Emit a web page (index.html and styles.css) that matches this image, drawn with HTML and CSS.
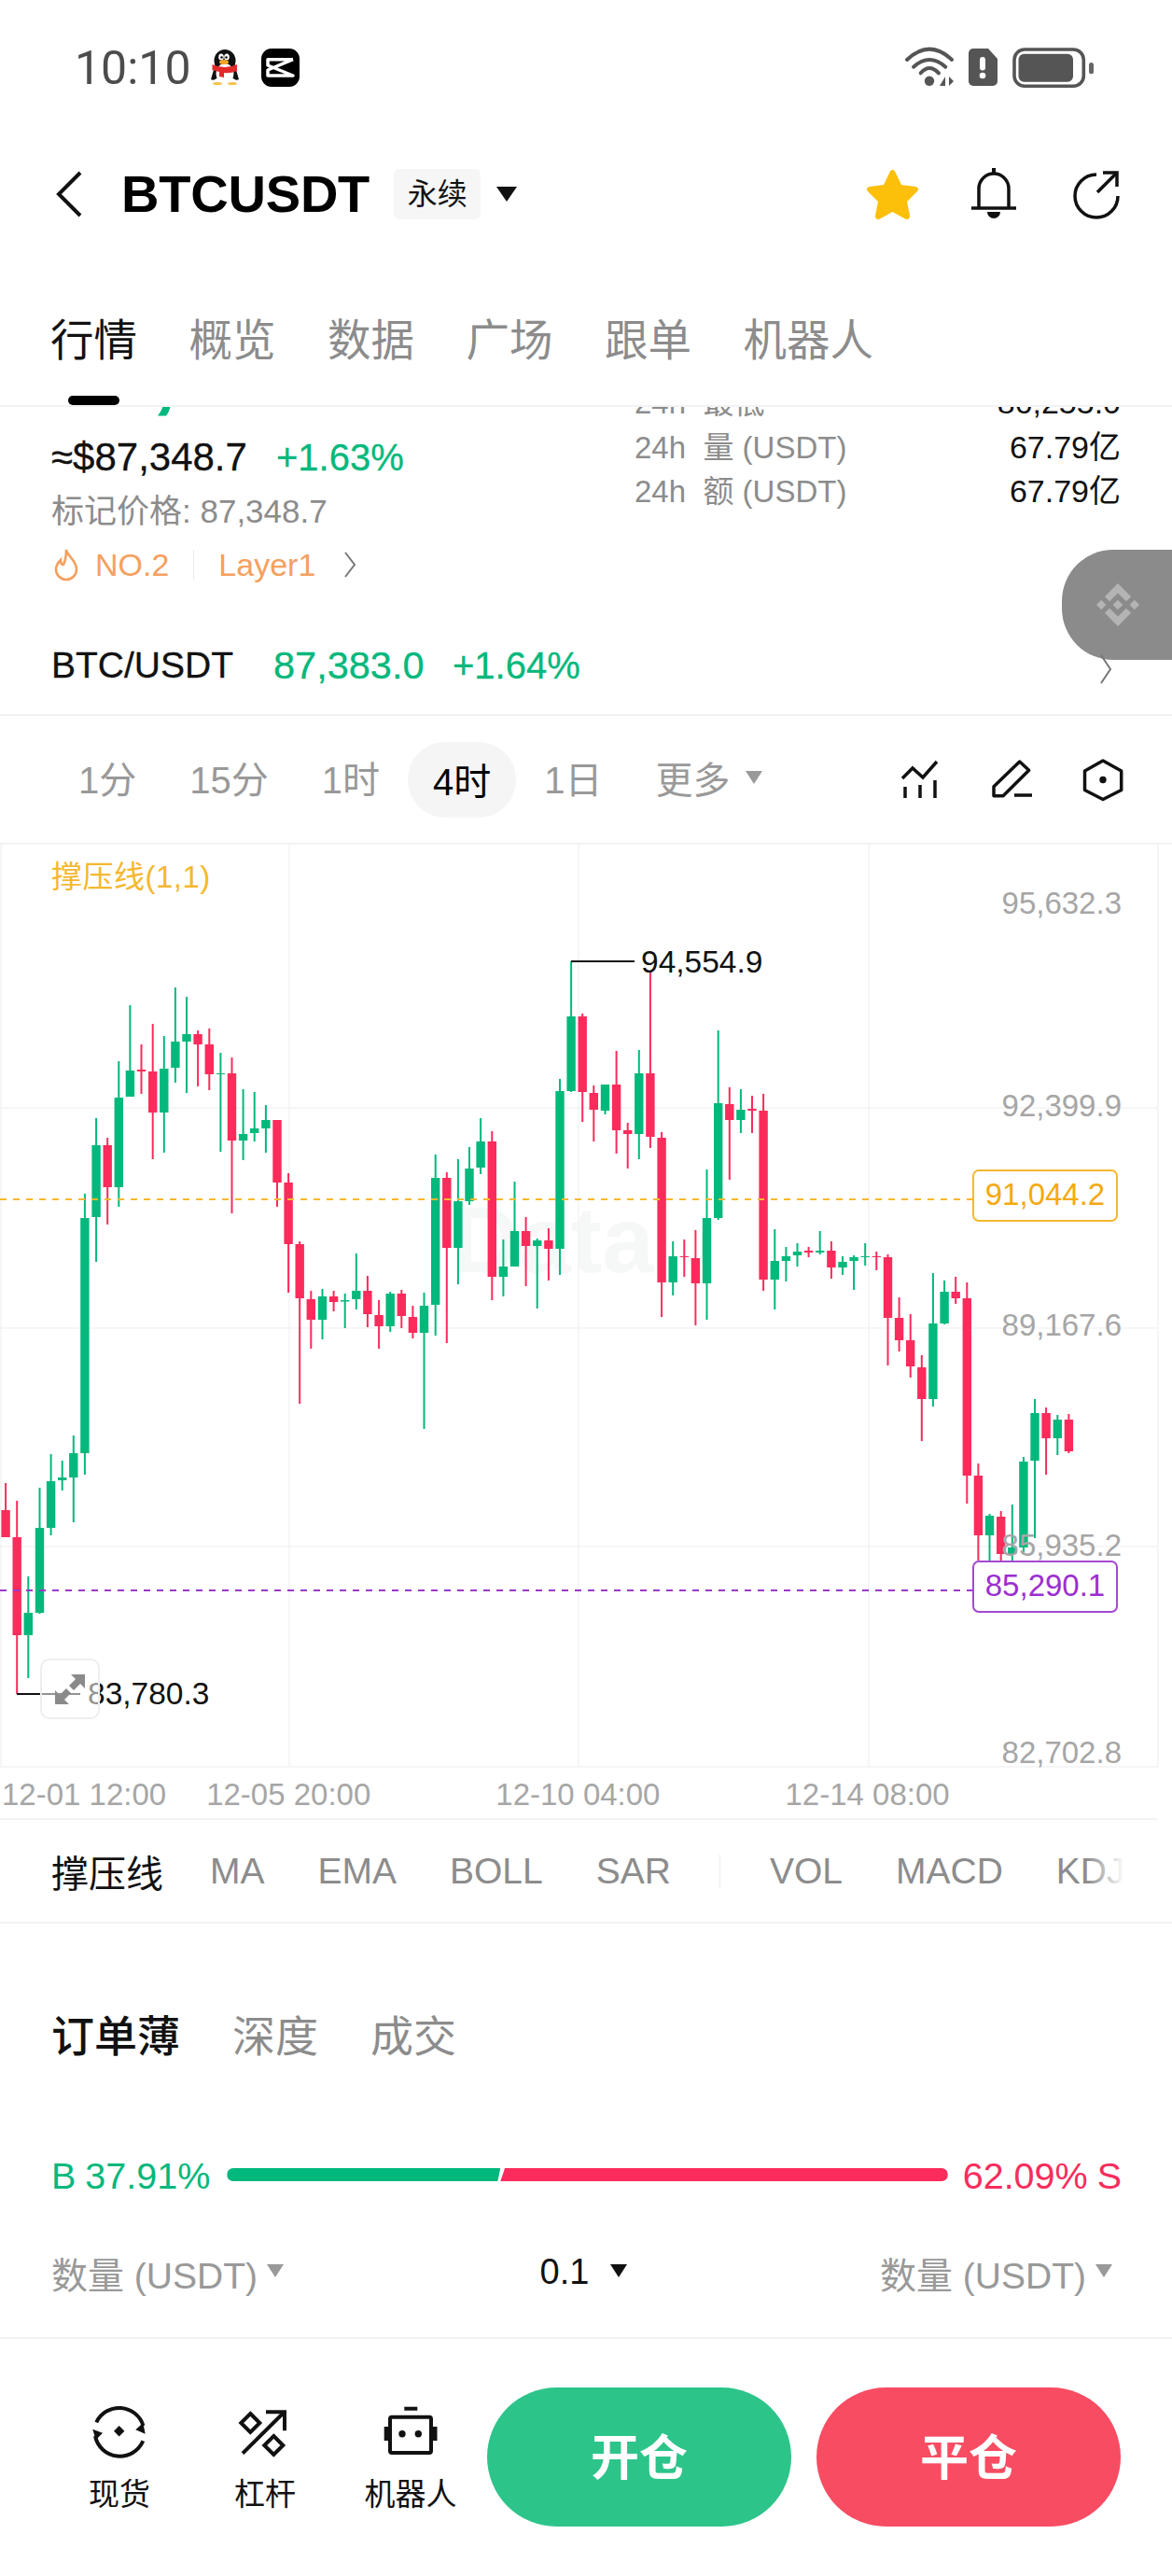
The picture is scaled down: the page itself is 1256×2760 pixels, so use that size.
FILE: index.html
```html
<!DOCTYPE html>
<html lang="zh">
<head>
<meta charset="utf-8">
<title>BTCUSDT</title>
<link rel="stylesheet" href="styles.css">
</head>
<body>
<div class="page">
  <header class="status">
    <span class="clock">10:10</span>
    <svg class="qq" viewBox="0 0 30 38"><ellipse cx="15" cy="12" rx="11.500" ry="12" fill="#111"/><path d="M5 15L0 32q3 2 6-1h18q3 3 6 1l-5-17z" fill="#111"/><ellipse cx="15" cy="26" rx="9.500" ry="11" fill="#fff"/><ellipse cx="11" cy="8" rx="2.800" ry="3.500" fill="#fff"/><ellipse cx="17" cy="8" rx="2.800" ry="3.500" fill="#fff"/><circle cx="11.500" cy="8.500" r="1.300" fill="#111"/><circle cx="16.500" cy="8.500" r="1.300" fill="#111"/><ellipse cx="14" cy="13.500" rx="5" ry="2.500" fill="#f5a623"/><path d="M1.500 16q13.500 6 26.500 0v7q-8 3-14 2v5l-5-1v-5q-4-1-7.500-2z" fill="#e32a2a"/><ellipse cx="7" cy="36.500" rx="5" ry="1.500" fill="#f5c14a"/><ellipse cx="23" cy="36.500" rx="5" ry="1.500" fill="#f5c14a"/></svg>
    <svg class="cc" viewBox="0 0 41 41"><rect width="41" height="41" rx="11" fill="#000"/><path d="M34 11.700H7V18L34 29H7v-6L34 11.700" fill="none" stroke="#fff" stroke-width="3.500" stroke-linejoin="round"/></svg>
    <div class="sys">
      <svg class="wifi" viewBox="0 0 52 40"><g fill="none" stroke="#555" stroke-width="4" stroke-linecap="round"><path d="M2 12Q26-10.600 50 12"/><path d="M9 19.700Q26 4.300 43.300 19.700"/><path d="M16.700 26.300Q26 15.700 36 26.300"/></g><circle cx="26" cy="34.700" r="5.200" fill="#555"/><path d="M43 30v10h-6zM47 30v10l5-5z" fill="#555"/></svg>
      <svg class="alert" viewBox="0 0 31 40"><path d="M5 0h16l10 11v24a5 5 0 0 1-5 5H5a5 5 0 0 1-5-5V5a5 5 0 0 1 5-5z" fill="#555"/><rect x="12" y="9" width="6" height="14.500" rx="3" fill="#fff"/><circle cx="15" cy="29" r="3.300" fill="#fff"/></svg>
      <svg class="batt" viewBox="0 0 87 43"><rect x="2" y="2" width="74.300" height="39.300" rx="11" fill="none" stroke="#555" stroke-width="3.600"/><rect x="6.500" y="6.700" width="58.500" height="30" rx="6" fill="#555"/><rect x="82" y="16" width="5" height="12.300" rx="2.500" fill="#666"/></svg>
    </div>
  </header>

  <nav class="nav">
    <svg class="back" viewBox="0 0 28 50"><path d="M26 2L3 25l23 23" fill="none" stroke="#111" stroke-width="4"/></svg>
    <h1 class="title">BTCUSDT</h1>
    <span class="badge">永续</span>
    <i class="tri tri-lg"></i>
    <div class="nav-icons">
      <svg class="star" viewBox="0 0 57 55"><path d="M28.500 1c1.500 0 2.500 1 3 2.500l6.500 13.500 15 2c3 .4 4 3 2 5L44 35l3 15c.5 3-2 5-5 3.500L28.500 46 15 53.500c-3 1.500-5.500-.5-5-3.500l3-15L2 24c-2-2-1-4.600 2-5l15-2 6.500-13.500C26 2 27 1 28.500 1z" fill="#fcbf0a"/></svg>
      <svg class="bell" viewBox="0 0 50 56"><g fill="none" stroke="#111" stroke-width="3.500"><path d="M9 42V22a16 16 0 0 1 32 0v20"/><path d="M1 43h48"/></g><rect x="23" y="0" width="4" height="7" fill="#111"/><path d="M18 47h14a7 7 0 0 1-14 0z" fill="#111"/></svg>
      <svg class="share" viewBox="0 0 50 52"><g fill="none" stroke="#111" stroke-width="3.500"><path d="M25 5a23 23 0 1 0 23 23"/><path d="M26 24L46 4"/><path d="M32 3h15v15"/></g></svg>
    </div>
  </nav>

  <div class="tabs">
    <div class="tab on">行情<i class="bar-ind"></i></div>
    <div class="tab">概览</div>
    <div class="tab">数据</div>
    <div class="tab">广场</div>
    <div class="tab">跟单</div>
    <div class="tab">机器人</div>
  </div>

  <section class="info">
    <div class="columns">
      <div class="left">
        <div class="big">87,383.0</div>
        <div class="approx"><span class="usd">≈$87,348.7</span><span class="up pct">+1.63%</span></div>
        <div class="mark">标记价格: 87,348.7</div>
        <div class="tags">
          <svg class="flame" viewBox="0 0 26 36"><path d="M13 2c1 7 11 11 11 21a11 11 0 0 1-22 0c0-5 3-8 5-10 0 3 1 5 3 5 2-4 3-10 3-16z" fill="none" stroke="#f5a05e" stroke-width="2.600"/></svg>
          <span class="no">NO.2</span><i class="tag-sep"></i><span class="no">Layer1</span>
          <svg class="chev tag-chev" viewBox="0 0 14 30"><path d="M2 2l10 13L2 28" fill="none" stroke="#777" stroke-width="2"/></svg>
        </div>
      </div>
      <div class="right">
        <div class="kv"><span>24h&nbsp;&nbsp;最低</span><b>86,255.0</b></div>
        <div class="kv"><span>24h&nbsp;&nbsp;量 (USDT)</span><b>67.79亿</b></div>
        <div class="kv"><span>24h&nbsp;&nbsp;额 (USDT)</span><b>67.79亿</b></div>
      </div>
    </div>
    <div class="pair">
      <span class="pair-name">BTC/USDT</span>
      <span class="up pair-price">87,383.0</span>
      <span class="up pair-pct">+1.64%</span>
    </div>
    <div class="float">
      <svg class="bnb" viewBox="0 0 126.610 126.610"><path d="M38.730 53.200l24.590-24.580 24.600 24.600 14.300-14.310L63.320 0 24.430 38.900zM0 63.310l14.300-14.310 14.310 14.310-14.310 14.300zM38.730 73.410l24.590 24.590 24.600-24.600 14.310 14.290-38.900 38.910-38.910-38.880-.02-.02zM97.990 63.310l14.300-14.310 14.320 14.310-14.310 14.300zM77.830 63.300L63.320 48.780 52.590 59.510l-1.240 1.230-2.540 2.540 14.510 14.500 14.510-14.470z" fill="#b4b4b4"/></svg>
    </div>
    <svg class="chev pair-chev" viewBox="0 0 14 34"><path d="M2 2l10 15L2 32" fill="none" stroke="#777" stroke-width="2"/></svg>
  </section>

  <div class="periods">
    <span class="per">1分</span>
    <span class="per">15分</span>
    <span class="per">1时</span>
    <span class="per per-on">4时</span>
    <span class="per">1日</span>
    <span class="per more">更多<i class="tri tri-grey"></i></span>
    <div class="tools">
      <svg class="tool t1" viewBox="0 0 40 42"><g fill="none" stroke="#111" stroke-width="3.500"><path d="M1 20L12 9l11 10L38 2"/><path d="M4 29v12M20 27v14M36 22v19"/></g></svg>
      <svg class="tool t2" viewBox="0 0 43 42"><path d="M2 38.700v-10L29.700 2l10 9.300L12 38.700z" fill="none" stroke="#111" stroke-width="3.500" stroke-linejoin="round"/><path d="M24 38h19" fill="none" stroke="#111" stroke-width="3.500"/></svg>
      <svg class="tool t3" viewBox="0 0 42 44"><path d="M21 2l19.700 11v20.500L21 43.500 1.500 33.500V13z" fill="none" stroke="#111" stroke-width="3.500" stroke-linejoin="round"/><circle cx="21" cy="22.500" r="3.700" fill="#111"/></svg>
    </div>
  </div>

  <div class="chart">
    <span class="wm">Data</span>
    <svg class="plot" viewBox="0 905 1256 990">
      <path class="grid" d="M1 905V1893M310 905V1893M620 905V1893M931 905V1893M1241 905V1893M0 1187H1241M0 1423H1241M0 1657H1241M0 1893H1241"/>
      <path class="wick g" d="M30.300 1689V1798M42.500 1594V1729M54.600 1558V1645M66.700 1565V1597M78.800 1538V1631M90.900 1279V1580M103.100 1198V1352M127.300 1137V1293M139.400 1077V1175M175.800 1110V1235M187.900 1058V1160M200 1068V1171M236.400 1128V1234M260.600 1167V1243M272.700 1170V1223M284.900 1184V1235M345.500 1381V1435M369.700 1386V1423M381.800 1343V1403M418.200 1384V1427M454.500 1385V1531M466.700 1237V1431M490.900 1242V1376M503 1229V1291M515.100 1198V1258M539.400 1328V1389M551.500 1266V1357M575.700 1327V1402M600 1156V1366M612.100 1030V1170M648.500 1162V1194M684.800 1125V1242M721.200 1330V1388M757.500 1253V1414M769.700 1104V1307M793.900 1167V1214M830.300 1317V1403M842.400 1336V1373M854.500 1332V1357M878.700 1319V1344M903 1346V1366M915.100 1345V1382M927.200 1332V1356M999.900 1364V1507M1012.100 1372V1419M1060.500 1622V1672M1084.800 1612V1672M1096.900 1561V1665M1109 1499V1648M1133.300 1516V1559"/>
      <path class="body g" d="M30.300 1728V1752M42.500 1637V1728M54.600 1587V1637M66.700 1583V1586M78.800 1557V1583M90.900 1305V1557M103.100 1227V1304M127.300 1176V1272M139.400 1147V1175M175.800 1145V1192M187.900 1116V1144M200 1108V1116M236.400 1150V1151M260.600 1215V1222M272.700 1209V1214M284.900 1200V1209M345.500 1389V1414M369.700 1393V1394.500M381.800 1383V1392M418.200 1386V1421M454.500 1399V1428M466.700 1262V1398M490.900 1287V1337M503 1252V1287M515.100 1223V1251M539.400 1357V1368M551.500 1319V1357M575.700 1329V1335M600 1169V1338M612.100 1089V1169M648.500 1162V1190M684.800 1150V1215M721.200 1346V1374M757.500 1305V1375M769.700 1182V1305M793.900 1189V1200M830.300 1351V1371M842.400 1346V1351M854.500 1341V1345M878.700 1340V1342M903 1352V1358M915.100 1347V1351M927.200 1346V1347M999.900 1418V1499M1012.100 1384V1418M1060.500 1624V1645M1084.800 1658V1665M1096.900 1566V1658M1109 1514V1565M1133.300 1521V1541"/>
      <path class="wick r" d="M6.100 1589V1647M18.200 1608V1815M115.200 1219V1312M151.500 1119V1172M163.700 1097V1242M212.100 1104V1164M224.300 1102V1168M248.500 1133V1300M297 1200V1293M309.100 1257V1385M321.200 1330V1504M333.300 1383V1445M357.600 1383V1405M393.900 1367V1422M406.100 1393V1445M430.300 1382V1423M442.400 1399V1434M478.800 1256V1439M527.300 1212V1393M563.600 1304V1378M587.900 1316V1372M624.200 1086V1202M636.300 1163V1223M660.600 1126V1236M672.700 1203V1252M696.900 1040V1230M709.100 1213V1411M733.300 1328V1368M745.400 1318V1420M781.800 1165V1264M806 1174V1214M818.100 1172V1383M866.600 1336V1347M890.900 1330V1370M939.300 1341V1361M951.500 1344V1463M963.600 1390V1448M975.700 1408V1476M987.800 1452V1544M1024.200 1368V1397M1036.300 1374V1611M1048.400 1568V1672M1072.700 1619V1672M1121.100 1508V1580M1145.400 1515V1557"/>
      <path class="body r" d="M6.100 1618V1647M18.200 1647V1752M115.200 1227V1272M151.500 1146V1148M163.700 1148V1192M212.100 1108V1119M224.300 1119V1151M248.500 1150V1222M297 1200V1267M309.100 1267V1333M321.200 1333V1391M333.300 1392V1414M357.600 1389V1395M393.900 1383V1408M406.100 1409V1421M430.300 1386V1410M442.400 1411V1428M478.800 1262V1337M527.300 1223V1368M563.600 1319V1335M587.900 1329V1338M624.200 1089V1170M636.300 1171V1189M660.600 1162V1211M672.700 1211V1215M696.900 1150V1218M709.100 1219V1374M733.300 1346V1347M745.400 1348V1375M781.800 1183V1200M806 1188V1190M818.100 1190V1371M866.600 1340V1342M890.900 1340V1358M939.300 1346V1347M951.500 1347V1412M963.600 1412V1436M975.700 1436V1464M987.800 1465V1499M1024.200 1384V1391M1036.300 1391V1581M1048.400 1581V1645M1072.700 1625V1665M1121.100 1514V1541M1145.400 1521V1555"/>
      <path class="dash yel" d="M0 1285H1042"/>
      <path class="dash pur" d="M0 1704H1042"/>
      <path class="ext" d="M612 1030H680M18 1815H86"/>
    </svg>
    <span class="legend">撑压线(1,1)</span>
    <span class="yl y1">95,632.3</span>
    <span class="yl y2">92,399.9</span>
    <span class="yl y3">89,167.6</span>
    <span class="yl y4">85,935.2</span>
    <span class="yl y5">82,702.8</span>
    <span class="ext-label hi">94,554.9</span>
    <span class="ext-label lo">83,780.3</span>
    <span class="tag yel-tag">91,044.2</span>
    <span class="tag pur-tag">85,290.1</span>
    <div class="expand">
      <svg viewBox="0 0 32 32"><path d="M32 0v15l-5-5-7 7-5-5 7-7-5-5zM0 32V17l5 5 7-7 5 5-7 7 5 5z" fill="#8a8a8a"/></svg>
    </div>
  </div>

  <div class="dates">
    <span class="d d1">12-01 12:00</span>
    <span class="d">12-05 20:00</span>
    <span class="d">12-10 04:00</span>
    <span class="d">12-14 08:00</span>
  </div>

  <div class="indicators">
    <span class="ind ind-on">撑压线</span>
    <span class="ind">MA</span>
    <span class="ind">EMA</span>
    <span class="ind">BOLL</span>
    <span class="ind">SAR</span>
    <i class="ind-sep"></i>
    <span class="ind">VOL</span>
    <span class="ind">MACD</span>
    <span class="ind">KDJ</span>
    <i class="ind-fade"></i>
  </div>

  <div class="book-tabs">
    <span class="btab on">订单薄</span>
    <span class="btab">深度</span>
    <span class="btab">成交</span>
  </div>

  <div class="ratio">
    <span class="up rt">B 37.91%</span>
    <div class="rbar"><i class="rg"></i><i class="rr"></i></div>
    <span class="dn rt">62.09% S</span>
  </div>

  <div class="qty">
    <span class="q">数量 (USDT)<i class="tri tri-grey"></i></span>
    <span class="q q-mid">0.1<i class="tri tri-dark"></i></span>
    <span class="q">数量 (USDT)<i class="tri tri-grey"></i></span>
  </div>

  <footer class="foot">
    <div class="fi">
      <svg class="fi-ic" viewBox="-1 0 58 58"><g fill="none" stroke="#111" stroke-width="4"><path d="M3.300 19.300A27 27 0 0 1 53.500 23"/><path d="M53.300 39.300A27 27 0 0 1 2 34"/></g><path d="M55.700 31.700L45.300 27.300 53.300 20zM-.7 26.700L10 30.700 2.700 38.300z" fill="#111"/><path d="M27.700 23l5.700 5.700-5.700 5.700-5.700-5.700z" fill="#111"/></svg>
      <span>现货</span>
    </div>
    <div class="fi">
      <svg class="fi-ic" viewBox="0 0 58 58"><g fill="none" stroke="#111" stroke-width="4"><path d="M5 52.700L49 9"/><path d="M30 8.300h20v20"/><path d="M13.300 10l10 10-10 10-10-10z"/><path d="M38.300 34l10 10-10 10-10-10z"/></g></svg>
      <span>杠杆</span>
    </div>
    <div class="fi">
      <svg class="fi-ic" viewBox="0 0 58 58"><rect x="7" y="13.700" width="44" height="38.300" rx="2" fill="none" stroke="#111" stroke-width="4"/><rect x="22.300" y="2.700" width="14" height="4" fill="#111"/><rect x=".7" y="24" width="4.500" height="15" fill="#111"/><rect x="53" y="24" width="4.500" height="15" fill="#111"/><circle cx="20" cy="31.700" r="3.700" fill="#111"/><circle cx="37.300" cy="31.700" r="3.700" fill="#111"/></svg>
      <span>机器人</span>
    </div>
    <button class="btn open">开仓</button>
    <button class="btn close">平仓</button>
  </footer>
</div>
</body>
</html>
```

FILE: styles.css
```css
* { box-sizing: border-box; }
html, body { margin: 0; padding: 0; background: #fff; }
body { font-family: "Liberation Sans", "Noto Sans CJK SC", sans-serif; color: #111; }
i { display: block; font-style: normal; }
svg { display: block; flex: none; overflow: visible; }
.page { width: 1256px; height: 2760px; overflow: hidden; }

.up { color: #03b87c; }
.dn { color: #f72c5c; }

.tri { width: 0; height: 0; border-style: solid; border-color: transparent; border-width: 0; flex: none; display: inline-block; }
.tri-lg { border-width: 16px 11px 0; border-top-color: #111; margin-left: 17px; }
.tri-grey { border-width: 14px 9px 0; border-top-color: #999; margin-left: 10px; }
.tri-dark { border-width: 14px 9px 0; border-top-color: #111; margin-left: 23px; }

/* status bar */
.status { height: 144px; padding: 0 84px 0 80px; display: flex; align-items: center; }
.clock { font-family: Roboto, "Liberation Sans", sans-serif; font-size: 50px; color: #4c4c4c; margin-top: 2px; }
.qq { width: 30px; height: 38px; margin-left: 21px; }
.cc { width: 41px; height: 41px; margin-left: 24px; }
.sys { margin-left: auto; display: flex; align-items: center; }
.wifi { width: 52px; height: 40px; }
.alert { width: 31px; height: 40px; margin-left: 16px; }
.batt { width: 87px; height: 43px; margin-left: 16px; }

/* nav */
.nav { height: 128px; padding: 0 56px 0 60px; display: flex; align-items: center; }
.back { width: 28px; height: 50px; }
.title { margin: 0 0 0 42px; font-size: 56px; line-height: 60px; font-weight: 700; color: #000; letter-spacing: -.2px; }
.badge { margin-left: 26px; width: 93px; height: 54px; line-height: 54px; text-align: center; background: #f6f6f6; border-radius: 6px; font-size: 32px; color: #111; }
.nav-icons { margin-left: auto; display: flex; align-items: center; }
.star { width: 57px; height: 55px; }
.bell { width: 50px; height: 56px; margin-left: 55px; }
.share { width: 50px; height: 52px; margin-left: 60px; }

/* tabs */
.tabs { height: 164px; padding: 68px 0 0 54px; display: flex; gap: 55.5px; border-bottom: 2px solid #f2f2f2; }
.tab { font-size: 46.5px; line-height: 50px; color: #8c8c8c; white-space: nowrap; }
.tab.on { color: #111; }
.bar-ind { width: 55px; height: 10px; margin: 34px 0 0 19px; border-radius: 5px; background: #000; }

/* info */
.info { position: relative; height: 331px; overflow: hidden; border-bottom: 2px solid #f1f1f1; }
.columns { height: 247px; padding: 0 55px; display: flex; justify-content: space-between; align-items: flex-start; }
.left { width: 560px; white-space: nowrap; }
.big { height: 100px; line-height: 100px; font-size: 100px; font-weight: 700; color: #03b87c; margin: -91px 0 0 -4px; }
.approx { margin-top: 20px; height: 50px; line-height: 50px; font-size: 42px; display: flex; -webkit-text-stroke: .3px; }
.usd { color: #111; width: 241px; }
.pct { font-size: 40px; }
.mark { margin-top: 11px; height: 44px; line-height: 44px; font-size: 35px; color: #8c8c8c; }
.tags { margin-top: 13px; height: 44px; display: flex; align-items: center; }
.flame { width: 26px; height: 36px; margin-left: 3px; }
.no { font-size: 34px; color: #f5a05e; }
.flame + .no { margin-left: 18px; }
.tag-sep { width: 1px; height: 33px; background: #ececec; margin: 0 26px; }
.tag-chev { width: 14px; height: 30px; margin-left: 30px; }
.right { width: 521px; margin-top: -28px; }
.kv { height: 47.5px; line-height: 47.5px; display: flex; justify-content: space-between; font-size: 33px; white-space: nowrap; }
.kv span { color: #8c8c8c; }
.kv b { font-weight: 400; color: #111; font-size: 34px; }
.pair { height: 60px; padding-left: 55px; display: flex; align-items: center; white-space: nowrap; -webkit-text-stroke: .3px; }
.pair-name { font-size: 39px; color: #111; width: 238px; }
.pair-price { font-size: 41.5px; width: 192px; }
.pair-pct { font-size: 40px; }
.float { position: absolute; left: 1138px; top: 153px; width: 118px; height: 118px; background: #8b8b8b; border-radius: 55px 0 0 55px; display: flex; align-items: center; justify-content: center; }
.bnb { width: 46px; height: 46px; margin-left: 2px; }
.pair-chev { position: absolute; left: 1178px; top: 264px; width: 14px; height: 34px; }

/* periods */
.periods { height: 138px; padding: 0 53px 0 84px; border-bottom: 2px solid #f2f2f2; display: flex; align-items: center; gap: 57px; }
.per { font-size: 40px; color: #999; white-space: nowrap; display: flex; align-items: center; margin-top: -4px; }
.per-on { color: #000; background: #f5f5f5; height: 81px; padding: 0 27px; margin: 0 -27px; border-radius: 40px; }
.more .tri { margin-left: 16px; }
.tools { margin-left: auto; display: flex; align-items: center; gap: 57px; }
.t1 { width: 40px; height: 42px; }
.t2 { width: 43px; height: 42px; }
.t3 { width: 42px; height: 44px; margin-left: -2px; }

/* chart */
.chart { position: relative; height: 990px; overflow: hidden; }
.plot { position: absolute; left: 0; top: 0; width: 1256px; height: 990px; }
.grid { fill: none; stroke: #f3f3f4; stroke-width: 1.5; }
.wick { fill: none; stroke-width: 2; }
.body { fill: none; stroke-width: 9.4; }
.g { stroke: #03b87c; }
.r { stroke: #fb2b5b; }
.dash { fill: none; stroke-width: 2; stroke-dasharray: 7 7; }
.yel { stroke: #f7b82e; }
.pur { stroke: #9b38c7; }
.ext { fill: none; stroke: #111; stroke-width: 2; }
.wm { position: absolute; left: 484px; top: 368px; font-size: 100px; line-height: 110px; font-weight: 700; color: #f6f7f7; }
.legend { position: absolute; left: 55px; top: 15px; font-size: 33px; line-height: 40px; letter-spacing: .5px; color: #f5b82e; }
.yl { position: absolute; right: 54px; font-size: 33px; line-height: 40px; color: #a6a6a6; }
.y1 { top: 43px; }
.y2 { top: 260px; }
.y3 { top: 495px; }
.y4 { top: 731px; }
.y5 { top: 953px; }
.ext-label { position: absolute; font-size: 33.5px; line-height: 40px; color: #111; }
.hi { left: 687px; top: 106px; }
.lo { left: 94px; top: 890px; }
.tag { position: absolute; left: 1042px; width: 156px; height: 56px; line-height: 50px; text-align: center; background: #fff; border: 2px solid; border-radius: 7px; font-size: 33px; }
.yel-tag { top: 348px; color: #f5a90f; border-color: #f7b82e; }
.pur-tag { top: 767px; color: #9b2fd0; border-color: #a448d2; }
.expand { position: absolute; left: 43px; top: 872px; width: 64px; height: 65px; background: rgba(255,255,255,.55); border: 2px solid #eeeeee; border-radius: 10px; display: flex; align-items: center; justify-content: center; }
.expand svg { width: 32px; height: 32px; }

/* dates */
.dates { position: relative; height: 55px; padding-left: 2px; display: flex; align-items: center; gap: 134px; }
.dates::after { content: ""; position: absolute; left: 0; bottom: 0; width: 1240px; height: 2px; background: #f2f2f2; }
.d { font-size: 33px; color: #a6a6a6; white-space: nowrap; }
.d1 { margin-right: -91px; }

/* indicators */
.indicators { position: relative; height: 111px; padding-left: 55px; border-bottom: 2px solid #f2f2f2; display: flex; align-items: center; gap: 57px; white-space: nowrap; }
.ind { font-size: 39px; color: #8c8c8c; }
.ind-on { font-size: 40px; color: #111; margin-right: -7px; }
.ind-sep { width: 1px; height: 36px; background: #ececec; margin: 0 -4px 0 -5px; }
.ind-fade { position: absolute; left: 1165px; top: 30px; width: 45px; height: 50px; background: linear-gradient(90deg, rgba(255,255,255,0), #fff 90%); }

/* order book */
.book-tabs { height: 240px; padding: 0 0 6px 55px; display: flex; align-items: center; gap: 56px; }
.btab { font-size: 46px; color: #8c8c8c; }
.btab.on { color: #111; font-weight: 500; }
.ratio { height: 60px; padding: 0 54px 0 55px; display: flex; align-items: center; white-space: nowrap; }
.rt { font-size: 39.5px; word-spacing: -1px; }
.rbar { flex: 1; margin: -2px 16px 0 18px; height: 14px; display: flex; }
.rg { width: 293px; background: #03b87c; border-radius: 7px 0 0 7px; clip-path: polygon(0 0, 100% 0, 99% 100%, 0 100%); }
.rr { flex: 1; background: #fb2b5b; border-radius: 0 7px 7px 0; clip-path: polygon(1% 0, 100% 0, 100% 100%, 0 100%); }

.qty { height: 145px; padding: 4px 64px 0 55px; display: flex; align-items: center; justify-content: space-between; border-bottom: 2px solid #f2f2f2; }
.q { font-size: 39px; color: #999; white-space: nowrap; display: flex; align-items: center; }
.q .tri { margin-top: -3px; }
.q-mid { color: #111; font-size: 38px; margin-left: 4px; }

/* footer */
.foot { height: 251px; padding: 52px 54px 0 50px; display: flex; align-items: flex-start; }
.fi { width: 156px; padding-top: 18px; display: flex; flex-direction: column; align-items: center; }
.fi-ic { width: 58px; height: 58px; }
.fi span { margin-top: 19px; font-size: 33px; line-height: 40px; color: #111; }
.fi:nth-child(3) { margin-right: 4px; }
.btn { width: 326px; height: 149px; border: 0; border-radius: 75px; color: #fff; font: 700 52px "Liberation Sans", "Noto Sans CJK SC", sans-serif; padding: 0 0 6px; }
.open { background: #2dc48a; }
.close { background: #f84c62; margin-left: 27px; }
```
